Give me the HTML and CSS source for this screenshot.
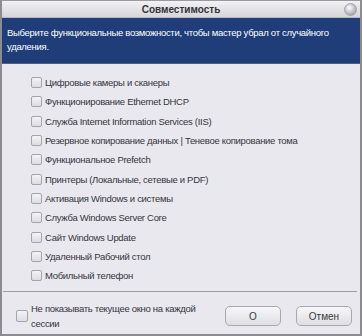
FILE: index.html
```html
<!DOCTYPE html>
<html lang="ru">
<head>
  <meta charset="UTF-8">
  <title>Совместимость</title>
  <link rel="stylesheet" href="styles.css">
</head>
<body>
  <div class="window">
    <div class="titlebar">
      <span class="title">Совместимость</span>
      <span class="orb"></span>
    </div>

    <div class="banner">
      Выберите функциональные возможности, чтобы мастер убрал от случайного удаления.
    </div>

    <ul class="features">
      <li><span class="box"></span>Цифровые камеры и сканеры</li>
      <li><span class="box"></span>Функционирование Ethernet DHCP</li>
      <li><span class="box"></span>Служба Internet Information Services (IIS)</li>
      <li><span class="box"></span>Резервное копирование данных | Теневое копирование тома</li>
      <li><span class="box"></span>Функциональное Prefetch</li>
      <li><span class="box"></span>Принтеры (Локальные, сетевые и PDF)</li>
      <li><span class="box"></span>Активация Windows и системы</li>
      <li><span class="box"></span>Служба Windows Server Core</li>
      <li><span class="box"></span>Сайт Windows Update</li>
      <li><span class="box"></span>Удаленный Рабочий стол</li>
      <li><span class="box"></span>Мобильный телефон</li>
    </ul>

    <div class="separator"></div>

    <div class="footer">
      <label class="dont-show"><span class="box"></span><span class="dont-show-text">Не показывать текущее окно на каждой сессии</span></label>
      <button class="btn ok">О</button>
      <button class="btn">Отмен</button>
    </div>
  </div>
</body>
</html>
```

FILE: styles.css
```css
* {
  box-sizing: border-box;
}

body {
  margin: 0;
  font-family: 'Liberation Sans', 'DejaVu Sans', sans-serif;
  font-size: 9.5px;
  letter-spacing: -0.3px;
  background: #e9e8ee;
}

.window {
  width: 362px;
  height: 336px;
  border: 2px solid #8c8b92;
  border-top: 1px solid #9a9aa0;
  background: #e9e8ee;
  display: flex;
  flex-direction: column;
}

.titlebar {
  height: 17px;
  background: linear-gradient(#f2f2f4, #d6d6da);
  display: flex;
  align-items: center;
  justify-content: center;
  position: relative;
  border-bottom: 1px solid #b9b9c0;
}

.title {
  font-weight: bold;
  color: #33333a;
  font-size: 10px;
  letter-spacing: 0;
}

.orb {
  position: absolute;
  right: 3px;
  top: 2px;
  width: 13px;
  height: 13px;
  border-radius: 50%;
  background: radial-gradient(circle at 40% 35%, #ffffff 0%, #c9c9cf 45%, #8e8e96 100%);
  border: 1px solid #a0a0a8;
}

.banner {
  height: 46px;
  background: #1e3d79;
  color: #fff;
  padding: 8px 6px 0 5px;
  line-height: 14px;
  border-bottom: 1px solid #4c5f88;
}

.features {
  list-style: none;
  margin: 0;
  padding: 9px 0 0 29px;
  flex: 1;
}

.features li {
  display: flex;
  align-items: center;
  height: 19.3px;
  color: #35353c;
}

.box {
  width: 11px;
  height: 11px;
  border: 1px solid #a4a4ac;
  border-radius: 2px;
  background: linear-gradient(#f4f4f6, #dcdce2);
  margin-right: 3px;
  flex: none;
}

.separator {
  height: 1px;
  background: #9d9da5;
  margin: 0 3px 0 1px;
}

.footer {
  height: 42px;
  display: flex;
  align-items: center;
  padding: 6px 8px 0 14px;
  gap: 15px;
}

.dont-show {
  display: flex;
  align-items: center;
  color: #35353c;
  line-height: 15px;
}

.dont-show-text {
  width: 172px;
}

.dont-show .box {
  width: 12px;
  height: 12px;
  margin-right: 3px;
}

.btn {
  width: 56px;
  height: 20px;
  border: 1px solid #a8a8b0;
  border-radius: 5px;
  background: linear-gradient(#f8f8fa, #dedee3);
  font-family: inherit;
  font-size: 10px;
  color: #3a3a40;
  padding: 0;
}

.ok {
  margin-left: auto;
}
```
